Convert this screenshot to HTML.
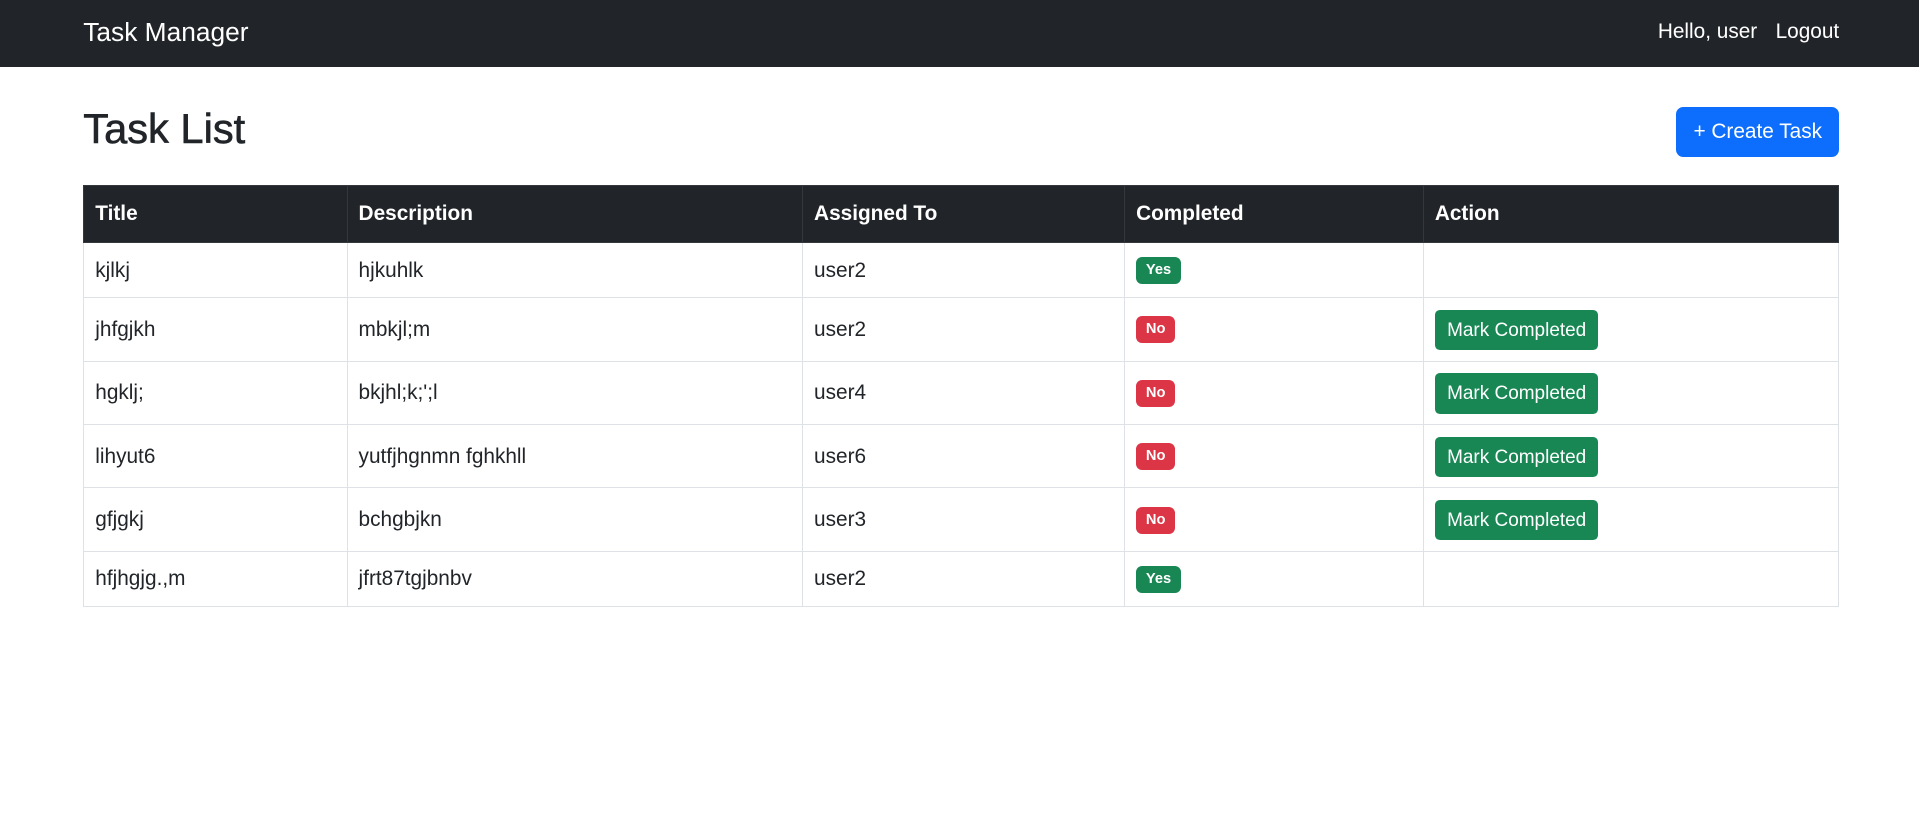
<!DOCTYPE html>
<html><head><meta charset="utf-8"><style>
html{zoom:1.2245}
body{margin:0;font-family:"Liberation Sans",sans-serif;color:#212529;background:#fff;width:1567px}
.nav{height:55px;background:#212529;position:relative;color:#fff}
.brand{position:absolute;left:68px;top:14px;font-size:21.5px}
.right{position:absolute;right:65px;top:16px;font-size:17px}
.right span{margin-left:15px}
h1{position:absolute;left:68px;top:86px;margin:0;font-size:34px;font-weight:500;-webkit-text-stroke:0.5px #212529}
.btn{position:absolute;left:1369px;top:87px;width:133px;height:41px;background:#0d6efd;color:#fff;border-radius:6px;font-size:17px;line-height:41px;text-align:center}
table{position:absolute;left:68px;top:151px;width:1434px;border-collapse:collapse;font-size:17px;line-height:20px}
td,th{border:1px solid #dee2e6;padding:1px 9px 0;text-align:left;vertical-align:middle}
th{background:#212529;color:#fff;border-color:#32383e;height:45px;font-weight:bold}
tr.s td{height:43px}tr.t td{height:50px}
.b{display:inline-block;color:#fff;font-size:12px;font-weight:bold;padding:0 8px;height:22px;line-height:22px;border-radius:5px;vertical-align:middle}
.y{background:#198754}.n{background:#dc3545}
.m{display:inline-block;background:#198754;color:#fff;font-size:15.5px;height:33px;line-height:34px;padding:0 10px;border-radius:4px;vertical-align:middle}
</style></head><body>
<div class="nav"><div class="brand">Task Manager</div><div class="right"><span>Hello, user</span><span>Logout</span></div></div>
<h1>Task List</h1>
<div class="btn">+ Create Task</div>
<table>
<colgroup><col style="width:215px"><col style="width:372px"><col style="width:263px"><col style="width:244px"><col></colgroup>
<tr><th>Title</th><th>Description</th><th>Assigned To</th><th>Completed</th><th>Action</th></tr>
<tr class="s"><td>kjlkj</td><td>hjkuhlk</td><td>user2</td><td><span class="b y">Yes</span></td><td></td></tr>
<tr class="t"><td>jhfgjkh</td><td>mbkjl;m</td><td>user2</td><td><span class="b n">No</span></td><td><span class="m">Mark Completed</span></td></tr>
<tr class="t"><td>hgklj;</td><td>bkjhl;k;';l</td><td>user4</td><td><span class="b n">No</span></td><td><span class="m">Mark Completed</span></td></tr>
<tr class="t"><td>lihyut6</td><td>yutfjhgnmn fghkhll</td><td>user6</td><td><span class="b n">No</span></td><td><span class="m">Mark Completed</span></td></tr>
<tr class="t"><td>gfjgkj</td><td>bchgbjkn</td><td>user3</td><td><span class="b n">No</span></td><td><span class="m">Mark Completed</span></td></tr>
<tr class="s"><td>hfjhgjg.,m</td><td>jfrt87tgjbnbv</td><td>user2</td><td><span class="b y">Yes</span></td><td></td></tr>
</table>
</body></html>
